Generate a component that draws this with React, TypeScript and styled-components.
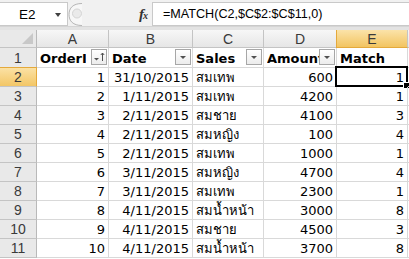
import React from "react";
import styled, { createGlobalStyle, css } from "styled-components";

const Global = createGlobalStyle`
  html, body { margin: 0; padding: 0; background: #ffffff; overflow: hidden; }
  body { font-family: "DejaVu Sans", "Noto Sans", sans-serif; }
`;

const Page = styled.div`
  width: 409px;
  height: 259px;
  overflow: hidden;
  background: #ffffff;
  display: flex;
  flex-direction: column;
`;

const FormulaBar = styled.div`
  height: 27px;
  box-sizing: border-box;
  display: flex;
  align-items: stretch;
  background: #f1f1f1;
  padding-top: 2px;
  border-bottom: 1px solid #d5d5d5;
`;

const NameBox = styled.div`
  width: 68px;
  box-sizing: border-box;
  background: #ffffff;
  border-top: 1px solid #c9c9c9;
  border-bottom: 1px solid #c9c9c9;
  border-right: 1px solid #c9c9c9;
  display: flex;
  align-items: center;
  position: relative;
  font-family: "Liberation Sans", Arial, sans-serif;
  font-size: 13.5px;
  color: #000;
  padding-left: 19px;
`;

const DropArrow = styled.div`
  position: absolute;
  right: 6px;
  top: 10px;
  width: 0;
  height: 0;
  border-left: 3.5px solid transparent;
  border-right: 3.5px solid transparent;
  border-top: 4px solid #404040;
`;

const Splitter = styled.div`
  width: 84px;
  display: flex;
  align-items: center;
  justify-content: space-between;
  padding-right: 5px;
  box-sizing: border-box;
`;

const FxLabel = styled.span`
  font-family: "Liberation Serif", "Times New Roman", serif;
  font-style: italic;
  font-weight: bold;
  font-size: 15px;
  color: #333;
  letter-spacing: -1px;
  & > small { font-size: 10px; }
`;

const FormulaInput = styled.div`
  flex: 1;
  background: #ffffff;
  border-top: 1px solid #c9c9c9;
  border-bottom: 1px solid #c9c9c9;
  border-left: 1px solid #c9c9c9;
  display: flex;
  align-items: center;
  padding-left: 10px;
  font-family: "Liberation Sans", Arial, sans-serif;
  font-size: 12.6px;
  color: #000;
`;

const Band = styled.div`
  height: 3px;
  background: #e3e3e3;
`;

const Grid = styled.div`
  display: grid;
  grid-template-columns: 37px 72px 84px 71px 73px 71px 1fr;
  grid-template-rows: 18px 20px repeat(10, 19px);
`;

const headerBase = css`
  box-sizing: border-box;
  border-right: 1px solid #c4c4c4;
  border-bottom: 1px solid #c4c4c4;
  display: flex;
  align-items: center;
  justify-content: center;
  font-family: "Liberation Sans", Arial, sans-serif;
  font-size: 14px;
  color: #3a3a3a;
`;

const ColHead = styled.div<{ $active?: boolean }>`
  ${headerBase};
  background: ${(p) =>
    p.$active
      ? "linear-gradient(#fbe3a9, #f2c461)"
      : "linear-gradient(#f7f7f7, #e6e6e6)"};
  ${(p) => p.$active && "border-bottom: 1px solid #e4a93b; border-left: 1px solid #e4a93b; margin-left: -1px;"}
`;

const Corner = styled.div`
  ${headerBase};
  background: #e9e9e9;
  border-right: 1px solid #b9b9b9;
  position: relative;
  &::after {
    content: "";
    position: absolute;
    right: 3px;
    bottom: 3px;
    width: 0;
    height: 0;
    border-left: 11px solid transparent;
    border-bottom: 11px solid #c8c8c8;
  }
`;

const RowHead = styled.div<{ $active?: boolean }>`
  ${headerBase};
  background: ${(p) => (p.$active ? "linear-gradient(#fbe1a4, #f3c666)" : "#e9e9e9")};
  border-right: 1px solid ${(p) => (p.$active ? "#e4a93b" : "#b9b9b9")};
  ${(p) => p.$active && "border-top: 1px solid #e4a93b; margin-top: -1px;"}
`;

const Cell = styled.div<{ $align?: "left" | "right"; $bold?: boolean }>`
  box-sizing: border-box;
  border-right: 1px solid #d9d9d9;
  border-bottom: 1px solid #d9d9d9;
  display: flex;
  align-items: center;
  justify-content: ${(p) => (p.$align === "right" ? "flex-end" : "flex-start")};
  padding: ${(p) => (p.$align === "right" ? "1px 3px 0 2px" : "1px 2px 0 3px")};
  font-size: 13px;
  font-weight: ${(p) => (p.$bold ? "bold" : "normal")};
  color: #000;
  white-space: nowrap;
  overflow: hidden;
  position: relative;
`;

const HeaderText = styled.span<{ $reserve?: number }>`
  display: block;
  flex: 1;
  min-width: 0;
  overflow: hidden;
  white-space: nowrap;
  margin-right: ${(p) => p.$reserve ?? 15}px;
`;

const Selected = styled(Cell)`
  overflow: visible;
  &::before {
    content: "";
    position: absolute;
    left: -2px;
    top: -2px;
    right: -1px;
    bottom: -1px;
    border: 2px solid #000;
    pointer-events: none;
  }
  &::after {
    content: "";
    position: absolute;
    right: -3px;
    bottom: -3px;
    width: 5px;
    height: 5px;
    background: #000;
    border: 1px solid #fff;
  }
`;

const FilterButton = styled.div`
  position: absolute;
  right: 1px;
  top: 1px;
  width: 16px;
  height: 16px;
  box-sizing: border-box;
  border: 1px solid #a7a7a7;
  background: linear-gradient(#ffffff, #ececec);
  display: flex;
  align-items: center;
  justify-content: center;
`;

const Caret = () => (
  <svg width="14" height="14" viewBox="0 0 14 14">
    <path d="M4 6 L10 6 L7 9 Z" fill="#505050" />
  </svg>
);

const SortCaret = () => (
  <svg width="14" height="14" viewBox="0 0 14 14">
    <path d="M2 8 L7 8 L4.5 10.5 Z" fill="#505050" />
    <path d="M10.5 3 L10.5 11 M8.8 5 L10.5 3 L12.2 5" stroke="#505050" strokeWidth="1" fill="none" />
  </svg>
);

const Grip = () => (
  <svg width="16" height="23" viewBox="0 0 16 23">
    <path d="M14 0.5 C 5 0.5, 1 5, 1 11.5 C 1 18, 5 22.5, 14 22.5" fill="#f7f7f7" stroke="#b5b5b5" />
    <circle cx="9" cy="10.5" r="4.5" fill="#eaeaea" stroke="#d4d4d4" />
  </svg>
);

type Row = [number, string, string, number, number];
const rows: Row[] = [
  [1, "31/10/2015", "สมเทพ", 600, 1],
  [2, "1/11/2015", "สมเทพ", 4200, 1],
  [3, "2/11/2015", "สมชาย", 4100, 3],
  [4, "2/11/2015", "สมหญิง", 100, 4],
  [5, "2/11/2015", "สมเทพ", 1000, 1],
  [6, "3/11/2015", "สมหญิง", 4700, 4],
  [7, "3/11/2015", "สมเทพ", 2300, 1],
  [8, "4/11/2015", "สมน้ำหน้า", 3000, 8],
  [9, "4/11/2015", "สมชาย", 4500, 3],
  [10, "4/11/2015", "สมน้ำหน้า", 3700, 8],
];

const cols = ["A", "B", "C", "D", "E", ""];

export default function App() {
  return (
    <Page>
      <Global />
      <FormulaBar>
        <NameBox>
          E2
          <DropArrow />
        </NameBox>
        <Splitter>
          <Grip />
          <FxLabel>
            f<small>x</small>
          </FxLabel>
        </Splitter>
        <FormulaInput>=MATCH(C2,$C$2:$C$11,0)</FormulaInput>
      </FormulaBar>
      <Band />
      <Grid>
        <Corner />
        {cols.map((c, i) => (
          <ColHead key={i} $active={c === "E"}>
            {c}
          </ColHead>
        ))}

        <RowHead>1</RowHead>
        <Cell $bold>
          <HeaderText $reserve={20}>OrderID</HeaderText>
          <FilterButton>
            <SortCaret />
          </FilterButton>
        </Cell>
        <Cell $bold>
          <HeaderText>Date</HeaderText>
          <FilterButton>
            <Caret />
          </FilterButton>
        </Cell>
        <Cell $bold>
          <HeaderText>Sales</HeaderText>
          <FilterButton>
            <Caret />
          </FilterButton>
        </Cell>
        <Cell $bold>
          <HeaderText>Amount</HeaderText>
          <FilterButton>
            <Caret />
          </FilterButton>
        </Cell>
        <Cell $bold>Match</Cell>
        <Cell />

        {rows.map((r, i) => (
          <React.Fragment key={i}>
            <RowHead $active={i === 0}>{i + 2}</RowHead>
            <Cell $align="right">{r[0]}</Cell>
            <Cell $align="right">{r[1]}</Cell>
            <Cell>{r[2]}</Cell>
            <Cell $align="right">{r[3]}</Cell>
            {i === 0 ? (
              <Selected $align="right">{r[4]}</Selected>
            ) : (
              <Cell $align="right">{r[4]}</Cell>
            )}
            <Cell />
          </React.Fragment>
        ))}
      </Grid>
    </Page>
  );
}
